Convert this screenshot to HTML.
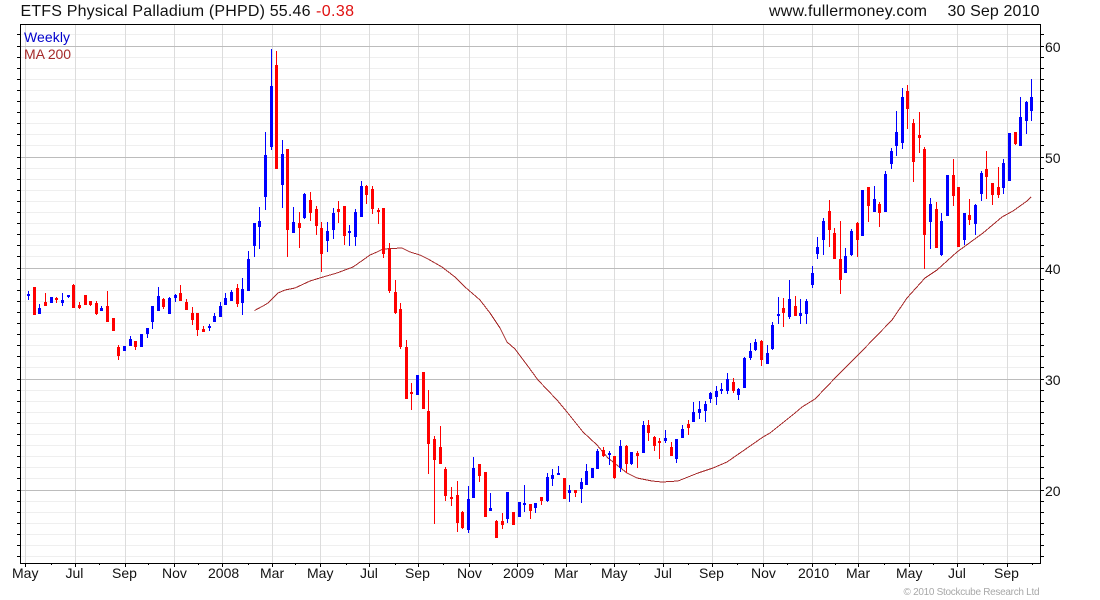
<!DOCTYPE html>
<html>
<head>
<meta charset="utf-8">
<title>ETFS Physical Palladium (PHPD)</title>
<style>
html,body{margin:0;padding:0;background:#fff;width:1100px;height:600px;overflow:hidden}
svg{display:block}
text{font-family:"Liberation Sans",Arial,sans-serif}
</style>
</head>
<body>
<svg width="1100" height="600" viewBox="0 0 1100 600" xmlns="http://www.w3.org/2000/svg">
<g shape-rendering="crispEdges" fill="none">
<path stroke="#efefef" stroke-width="1" d="M21 34.5H1040M21 57.5H1040M21 68.5H1040M21 79.5H1040M21 90.5H1040M21 101.5H1040M21 112.5H1040M21 123.5H1040M21 134.5H1040M21 145.5H1040M21 168.5H1040M21 179.5H1040M21 190.5H1040M21 201.5H1040M21 212.5H1040M21 223.5H1040M21 234.5H1040M21 245.5H1040M21 256.5H1040M21 279.5H1040M21 290.5H1040M21 301.5H1040M21 312.5H1040M21 323.5H1040M21 334.5H1040M21 345.5H1040M21 356.5H1040M21 367.5H1040M21 390.5H1040M21 401.5H1040M21 412.5H1040M21 423.5H1040M21 434.5H1040M21 445.5H1040M21 456.5H1040M21 467.5H1040M21 478.5H1040M21 501.5H1040M21 512.5H1040M21 523.5H1040M21 534.5H1040M21 545.5H1040M21 556.5H1040"/>
<path stroke="#dcdcdc" stroke-width="1" d="M25.5 25V563M75.5 25V563M125.5 25V563M174.5 25V563M222.5 25V563M272.5 25V563M320.5 25V563M369.5 25V563M418.5 25V563M469.5 25V563M517.5 25V563M566.5 25V563M614.5 25V563M663.5 25V563M712.5 25V563M763.5 25V563M812.5 25V563M858.5 25V563M909.5 25V563M957.5 25V563M1007.5 25V563"/>
<path stroke="#bcbcbc" stroke-width="1" d="M21 46.5H1040M21 157.5H1040M21 268.5H1040M21 379.5H1040M21 490.5H1040"/>
<path stroke="#a52a2a" stroke-width="1" stroke-linejoin="round" d="M254.5 310.5L263 306L268 303L278 293L285 290L295 288L310 281L323 277L337 273L353 267L363 260L370 255L377 252L383 249L402 248L410 252L420 255L428 259L442 267L455 277L465 287L480 300L490 313L500 328L507 342L515 349L527 365L538 380L557 400L567 412L583 432L597 445L608 458L627 473L637 478L652 481L662 482L678 481L698 473L713 468L727 462L740 453L763 437L770 433L795 413L802 407L815 399L837 376L848 365L860 353L892 320L907 298L925 278L937 270L957 252L983 233L1002 217L1013 211L1027 201L1031 197"/>
<!-- blue wicks -->
<path stroke="#0000ff" stroke-width="1" d="M28.5 291V300M39.5 304V314M56.5 0V0M62.5 293V306M68.5 295V298M101.5 306V311M130.5 336V346M147.5 328V338M152.5 306V329M158.5 287V311M169.5 297V314M175.5 294V302M209.5 324V331M214.5 313V322M220.5 302V317M225.5 293V305M231.5 290V301M242.5 278V315M248.5 251V291M254.5 223V257M259.5 207V249M265.5 132V210M271.5 49V150M282.5 140V208M293.5 207V233M304.5 193V219M327.5 222V252M333.5 208V239M349.5 225V246M355.5 209V246M361.5 181V217M468.5 486V533M473.5 457V498M490.5 493V511M507.5 492V523M524.5 485V512M535.5 503V513M547.5 473V502M552.5 469V486M558.5 466V475M569.5 485V502M581.5 478V503M586.5 464V485M597.5 449V469M609.5 451V465M620.5 440V472M631.5 452V465M643.5 421V453M665.5 430V443M676.5 439V463M682.5 425V438M693.5 402V422M699.5 401V419M705.5 401V422M710.5 392V403M716.5 386V405M721.5 383V394M727.5 373V394M738.5 388V400M744.5 357V388M750.5 343V360M755.5 339V351M767.5 345V364M772.5 322V350M778.5 297V324M789.5 280V319M800.5 299V324M806.5 299V324M812.5 266V288M817.5 237V259M823.5 218V255M845.5 248V273M851.5 229V256M874.5 186V212M885.5 171V212M891.5 148V169M896.5 111V156M902.5 88V149M930.5 198V249M941.5 213V256M964.5 213V245M975.5 204V235M981.5 171V201M1003.5 159V194M1020.5 97V146M1026.5 101V134M1031.5 79V121"/>
<!-- blue bodies -->
<path stroke="#0000ff" stroke-width="3" d="M28.5 294V296M39.5 308V314M51.5 297V303M62.5 300V303M68.5 295V297M101.5 308V311M124.5 346V351M130.5 339V346M141.5 334V347M147.5 328V334M152.5 306V322M158.5 296V311M169.5 298V314M175.5 295V298M209.5 326V328M214.5 316V322M220.5 306V317M225.5 298V305M231.5 292V301M242.5 289V303M248.5 259V291M254.5 223V246M259.5 221V227M265.5 155V197M271.5 86V147M282.5 154V185M293.5 222V233M304.5 194V218M327.5 231V241M333.5 213V230M349.5 231V233M355.5 212V237M361.5 186V217M417.5 375V395M468.5 499V530M473.5 468V498M490.5 508V511M507.5 492V519M519.5 502V517M524.5 503V505M535.5 503V508M547.5 477V501M552.5 475V479M558.5 473V475M569.5 490V493M581.5 482V489M586.5 471V485M592.5 468V478M597.5 451V469M609.5 453V455M620.5 446V468M631.5 452V464M643.5 425V453M665.5 438V441M676.5 439V459M682.5 429V438M693.5 412V422M699.5 409V413M705.5 404V411M710.5 393V399M716.5 391V397M721.5 389V391M727.5 379V391M738.5 389V395M744.5 358V388M750.5 351V358M755.5 342V350M767.5 353V364M772.5 325V349M778.5 314V316M789.5 299V317M800.5 313V316M806.5 301V314M812.5 273V285M817.5 247V254M823.5 221V240M845.5 256V273M851.5 231V255M862.5 190V236M874.5 199V212M885.5 174V212M891.5 151V164M896.5 132V146M902.5 97V143M930.5 204V222M941.5 221V255M947.5 175V216M964.5 213V240M975.5 205V224M981.5 173V194M1003.5 163V188M1009.5 133V181M1020.5 117V146M1026.5 102V121M1031.5 97V111"/>
<!-- red wicks -->
<path stroke="#ff0000" stroke-width="1" d="M45.5 293V306M56.5 297V303M73.5 284V308M79.5 302V309M90.5 301V306M96.5 301V315M107.5 291V322M118.5 345V360M135.5 341V350M163.5 298V309M180.5 285V301M186.5 299V310M192.5 307V325M197.5 313V336M203.5 326V332M237.5 284V307M276.5 51V169M287.5 149V257M299.5 212V248M310.5 192V221M316.5 206V235M321.5 222V272M338.5 201V223M344.5 206V245M366.5 185V204M372.5 186V214M378.5 208V224M383.5 208V258M389.5 243V293M395.5 280V314M400.5 303V349M406.5 340V399M411.5 383V410M423.5 372V409M428.5 390V474M434.5 436V524M440.5 426V464M445.5 467V501M451.5 487V506M457.5 481V532M462.5 511V529M479.5 464V482M496.5 520V538M502.5 513V529M530.5 504V519M541.5 497V505M575.5 490V497M603.5 447V457M614.5 456V479M626.5 445V473M637.5 451V468M648.5 420V441M654.5 436V451M659.5 438V459M671.5 442V456M688.5 420V435M733.5 378V393M761.5 340V366M783.5 298V327M795.5 296V316M829.5 200V247M834.5 228V259M840.5 221V294M857.5 222V257M868.5 187V222M879.5 202V227M907.5 85V129M913.5 119V182M919.5 112V153M924.5 147V269M936.5 202V248M953.5 159V206M969.5 199V225M986.5 151V199M992.5 183V205M998.5 167V198M1015.5 132V145"/>
<!-- red bodies -->
<path stroke="#ff0000" stroke-width="3" d="M34.5 287V315M45.5 302V306M56.5 298V300M73.5 285V308M79.5 305V308M85.5 295V305M90.5 301V305M96.5 303V314M107.5 306V322M113.5 318V331M118.5 347V356M135.5 341V347M163.5 299V307M180.5 293V301M186.5 302V310M192.5 313V320M197.5 313V330M203.5 329V332M237.5 288V304M276.5 65V169M287.5 149V230M299.5 223V228M310.5 200V213M316.5 209V226M321.5 228V254M338.5 209V212M344.5 206V236M366.5 186V195M372.5 189V209M378.5 210V212M383.5 208V254M389.5 249V291M395.5 292V313M400.5 309V347M406.5 347V399M411.5 392V394M423.5 372V409M428.5 411V444M434.5 439V460M440.5 447V464M445.5 469V496M451.5 497V499M457.5 495V523M462.5 512V528M479.5 464V476M485.5 472V517M496.5 521V538M502.5 521V525M513.5 512V525M530.5 504V511M541.5 497V501M564.5 478V499M575.5 490V493M603.5 450V456M614.5 456V478M626.5 446V464M637.5 453V456M648.5 425V433M654.5 437V446M659.5 441V443M671.5 447V456M688.5 424V428M733.5 382V391M761.5 341V360M783.5 308V313M795.5 306V316M829.5 211V230M834.5 233V259M840.5 259V280M857.5 223V240M868.5 187V206M879.5 204V213M907.5 91V109M913.5 123V162M919.5 135V138M924.5 149V235M936.5 209V248M953.5 175V196M958.5 187V247M969.5 215V220M986.5 169V177M992.5 183V195M998.5 187V195M1015.5 132V144"/>
<!-- axes -->
<path stroke="#000" stroke-width="1" d="M20.5 24V564M20 24.5H1041M1040.5 24V564M20 563.5H1041"/>
<path stroke="#000" stroke-width="1" d="M17 34.5H20M17 46.5H20M17 57.5H20M17 68.5H20M17 79.5H20M17 90.5H20M17 101.5H20M17 112.5H20M17 123.5H20M17 134.5H20M17 145.5H20M17 157.5H20M17 168.5H20M17 179.5H20M17 190.5H20M17 201.5H20M17 212.5H20M17 223.5H20M17 234.5H20M17 245.5H20M17 256.5H20M17 268.5H20M17 279.5H20M17 290.5H20M17 301.5H20M17 312.5H20M17 323.5H20M17 334.5H20M17 345.5H20M17 356.5H20M17 367.5H20M17 379.5H20M17 390.5H20M17 401.5H20M17 412.5H20M17 423.5H20M17 434.5H20M17 445.5H20M17 456.5H20M17 467.5H20M17 478.5H20M17 490.5H20M17 501.5H20M17 512.5H20M17 523.5H20M17 534.5H20M17 545.5H20M17 556.5H20"/>
<path stroke="#000" stroke-width="1" d="M1041 34.5H1044M1041 46.5H1044M1041 57.5H1044M1041 68.5H1044M1041 79.5H1044M1041 90.5H1044M1041 101.5H1044M1041 112.5H1044M1041 123.5H1044M1041 134.5H1044M1041 145.5H1044M1041 157.5H1044M1041 168.5H1044M1041 179.5H1044M1041 190.5H1044M1041 201.5H1044M1041 212.5H1044M1041 223.5H1044M1041 234.5H1044M1041 245.5H1044M1041 256.5H1044M1041 268.5H1044M1041 279.5H1044M1041 290.5H1044M1041 301.5H1044M1041 312.5H1044M1041 323.5H1044M1041 334.5H1044M1041 345.5H1044M1041 356.5H1044M1041 367.5H1044M1041 379.5H1044M1041 390.5H1044M1041 401.5H1044M1041 412.5H1044M1041 423.5H1044M1041 434.5H1044M1041 445.5H1044M1041 456.5H1044M1041 467.5H1044M1041 478.5H1044M1041 490.5H1044M1041 501.5H1044M1041 512.5H1044M1041 523.5H1044M1041 534.5H1044M1041 545.5H1044M1041 556.5H1044"/>
<path stroke="#000" stroke-width="1" d="M25.5 564V567M75.5 564V567M125.5 564V567M174.5 564V567M222.5 564V567M272.5 564V567M320.5 564V567M369.5 564V567M418.5 564V567M469.5 564V567M517.5 564V567M566.5 564V567M614.5 564V567M663.5 564V567M712.5 564V567M763.5 564V567M812.5 564V567M858.5 564V567M909.5 564V567M957.5 564V567M1007.5 564V567"/>
<path stroke="#000" stroke-width="1" d="M51.5 564V565M99.5 564V565M148.5 564V565M198.5 564V565M248.5 564V565M295.5 564V565M346.5 564V565M395.5 564V565M443.5 564V565M492.5 564V565M543.5 564V565M590.5 564V565M639.5 564V565M688.5 564V565M737.5 564V565M787.5 564V565M835.5 564V565M884.5 564V565M933.5 564V565M983.5 564V565M1032.5 564V565"/>
</g>
<text x="20.5" y="16" font-size="16" fill="#111" textLength="290" lengthAdjust="spacing">ETFS Physical Palladium (PHPD) 55.46</text>
<text x="316" y="16" font-size="16" fill="#e01010" textLength="38" lengthAdjust="spacing">-0.38</text>
<text x="769" y="16" font-size="16" fill="#111" textLength="158" lengthAdjust="spacing">www.fullermoney.com</text>
<text x="947.5" y="16" font-size="16" fill="#111" textLength="92" lengthAdjust="spacing">30 Sep 2010</text>
<text x="24" y="42" font-size="14" fill="#0000cc" textLength="46" lengthAdjust="spacing">Weekly</text>
<text x="24" y="59" font-size="14" fill="#a52a2a" textLength="47" lengthAdjust="spacing">MA 200</text>
<g font-size="14" fill="#111">
<text x="1045" y="52">60</text>
<text x="1045" y="163">50</text>
<text x="1045" y="274">40</text>
<text x="1045" y="385">30</text>
<text x="1045" y="496">20</text>
<text x="12" y="578">May</text>
<text x="65.5" y="578">Jul</text>
<text x="112" y="578">Sep</text>
<text x="162" y="578">Nov</text>
<text x="208" y="578">2008</text>
<text x="260" y="578">Mar</text>
<text x="307" y="578">May</text>
<text x="360" y="578">Jul</text>
<text x="405" y="578">Sep</text>
<text x="457" y="578">Nov</text>
<text x="503" y="578">2009</text>
<text x="554" y="578">Mar</text>
<text x="601" y="578">May</text>
<text x="654" y="578">Jul</text>
<text x="699" y="578">Sep</text>
<text x="751" y="578">Nov</text>
<text x="798" y="578">2010</text>
<text x="846" y="578">Mar</text>
<text x="896" y="578">May</text>
<text x="948" y="578">Jul</text>
<text x="994" y="578">Sep</text>
</g>
<text x="903.5" y="595" font-size="10" fill="#a8a8a8" textLength="136" lengthAdjust="spacing">© 2010 Stockcube Research Ltd</text>
</svg>
</body>
</html>
